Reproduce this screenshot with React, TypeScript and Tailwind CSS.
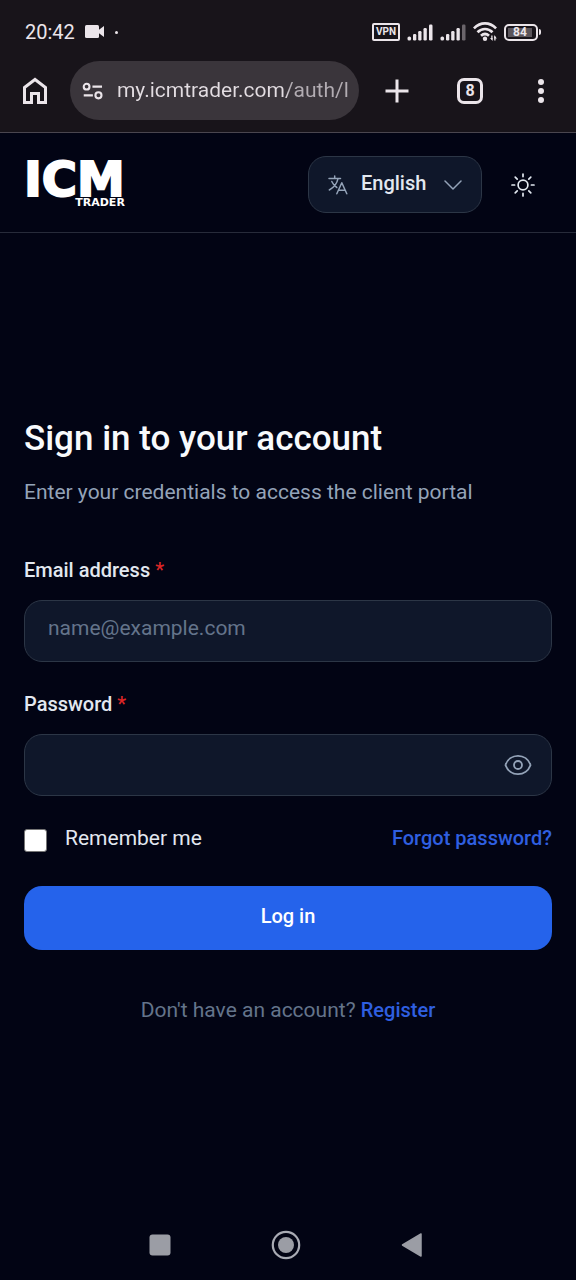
import { useState } from "react";

function VideoIcon() {
  return (
    <svg width="20" height="14" viewBox="0 0 20 14" fill="#ebe5ea" aria-hidden="true">
      <rect x="0" y="0" width="14" height="13" rx="1.5" />
      <path d="M13 5.5 19 1v11l-6-4.5z" />
    </svg>
  );
}

function SignalIcon({ weak = false }: { weak?: boolean }) {
  return (
    <svg width="26" height="18" viewBox="0 0 26 18" fill="#ebe5ea" aria-hidden="true">
      <rect x="0.5" y="13.500" width="3.6" height="4" rx="1.6" />
      <rect x="6" y="11" width="3.3" height="6.500" rx="1.2" />
      <rect x="11.2" y="8" width="3.3" height="9.500" rx="1.2" />
      <rect x="16.5" y="5" width="3.3" height="12.500" rx="1.2" />
      <rect x="22" y="1.500" width="3.5" height="16" rx="1.2" fill={weak ? "#6b656b" : "#ebe5ea"} />
    </svg>
  );
}

function WifiIcon() {
  return (
    <svg width="24" height="20" viewBox="0 0 24 20" fill="none" stroke="#ebe5ea" strokeWidth="2.7" aria-hidden="true">
      <path d="M.9 6.400C7.500-.3 16.500-.3 23.100 6.400" />
      <path d="M4.500 10.200c4.400-4.300 10.600-4.300 15 0" />
      <path d="M8 13.800c2.400-2.200 5.600-2.200 8 0" />
      <circle cx="12" cy="16.800" r="2.200" fill="#ebe5ea" stroke="none" />
      <path d="M18.900 13.500v4M21.900 14.500v4" strokeWidth="1.300" />
      <path d="M17 16h2.600v3zM21.200 16.500h2.600L21.200 13z" fill="#ebe5ea" stroke="none" />
    </svg>
  );
}

function HomeIcon() {
  return (
    <svg width="26" height="28" viewBox="0 0 26 28" fill="none" stroke="#ebe5ea" strokeWidth="3" aria-hidden="true">
      <path d="M2.500 10.500 13 2.500l10.500 8v15h-7v-9h-7v9h-7z" />
    </svg>
  );
}

function TuneIcon() {
  return (
    <svg width="24" height="20" viewBox="0 0 24 20" fill="none" stroke="#ebe5ea" strokeWidth="2.400" aria-hidden="true">
      <circle cx="5.300" cy="5" r="3.300" />
      <path d="M12 5h11M2 15h10.500" />
      <circle cx="18.900" cy="15" r="3.500" />
    </svg>
  );
}

function TranslateIcon() {
  return (
    <svg width="20" height="20" viewBox="0 0 20 20" fill="none" stroke="#94a3b8" strokeWidth="1.500" strokeLinecap="round" strokeLinejoin="round" aria-hidden="true">
      <path d="M1 3.500h11.500M6.700 1v2.500M10 3.700C9 8.500 6 12.500 1.300 15M3.800 6.500c1.200 2.800 3 4.700 5 6" />
      <path d="m8.800 18.800 5-11 5 11M10.500 15.300h6.700" />
    </svg>
  );
}

function SunIcon() {
  return (
    <svg width="26" height="26" viewBox="0 0 26 26" fill="none" stroke="#e2e8f0" strokeWidth="1.700" strokeLinecap="round" aria-hidden="true">
      <circle cx="13" cy="13" r="4.900" />
      <path d="M13 2v2.600M13 21.400V24M2 13h2.600M21.400 13H24M5.200 5.200l2 2M18.800 18.800l2 2M5.200 20.800l2-2M18.800 7.200l2-2" />
    </svg>
  );
}

function EyeIcon() {
  return (
    <svg width="28" height="22" viewBox="0 0 28 22" fill="none" stroke="#94a3b8" strokeWidth="1.800" strokeLinejoin="round" aria-hidden="true">
      <path d="M1.600 11.400a1 1 0 0 1 0-.8C3.500 5.500 8.300 1.800 14 1.800s10.500 3.700 12.400 8.800a1 1 0 0 1 0 .8C24.500 16.500 19.700 20.200 14 20.200S3.500 16.500 1.600 11.400Z" />
      <circle cx="14" cy="11" r="4" />
    </svg>
  );
}

function StatusBar() {
  return (
    <div className="flex h-16 items-center justify-between pr-[35px] pl-[25px]">
      <div className="flex items-center gap-[10px]">
        <span className="text-xl text-[#ebe5ea]">20:42</span>
        <VideoIcon />
        <span className="h-[3px] w-[3px] rounded-full bg-[#ebe5ea]" />
      </div>
      <div className="flex items-center gap-[7px]">
        <span className="flex h-[18px] w-7 items-center justify-center rounded-xs border-2 border-[#ebe5ea] text-[10px] leading-none font-bold text-[#ebe5ea]">
          VPN
        </span>
        <SignalIcon />
        <SignalIcon weak />
        <WifiIcon />
        <span className="flex items-center gap-px">
          <span className="flex h-[17px] w-[34px] items-center rounded-[5px] border-2 border-[#ebe5ea] p-0.5">
            <span className="flex h-full w-6 items-center justify-center bg-[#5b555b] text-xs leading-none font-bold text-[#ebe5ea]">
              84
            </span>
          </span>
          <span className="h-[6px] w-0.5 rounded-r bg-[#ebe5ea]" />
        </span>
      </div>
    </div>
  );
}

function BrowserBar() {
  return (
    <div className="flex h-[68px] items-start pr-[23px] pl-[22px]">
      <button type="button" aria-label="Home" className="flex h-[54px] w-[26px] items-center justify-center">
        <HomeIcon />
      </button>
      <div className="-mt-[3px] ml-[22px] flex h-[59px] min-w-0 flex-1 items-center gap-[14px] rounded-full bg-[#3a353b] pr-2 pl-3">
        <TuneIcon />
        <input
          type="text"
          aria-label="Address"
          readOnly
          value="my.icmtrader.com/auth/l"
          className="w-full min-w-0 bg-linear-to-r from-[#e3dde2] from-72% to-[#b3adb3] to-74% bg-clip-text text-[21px] text-transparent outline-none"
        />
      </div>
      <button type="button" aria-label="New tab" className="ml-[26px] flex h-[54px] w-6 items-center justify-center">
        <svg width="24" height="24" viewBox="0 0 24 24" stroke="#ebe5ea" strokeWidth="3" aria-hidden="true">
          <path d="M12 .5v23M.5 12h23" />
        </svg>
      </button>
      <button type="button" aria-label="Switch tabs" className="ml-12 flex h-[54px] w-[26px] items-center justify-center">
        <span className="flex h-[26px] w-[26px] items-center justify-center rounded-[7px] border-3 border-[#ebe5ea] text-base leading-none font-bold text-[#ebe5ea]">
          8
        </span>
      </button>
      <button type="button" aria-label="More" className="ml-[46px] flex h-[54px] w-6 items-center justify-center">
        <svg width="6" height="24" viewBox="0 0 6 24" fill="#ebe5ea" aria-hidden="true">
          <circle cx="3" cy="3" r="3" />
          <circle cx="3" cy="12" r="3" />
          <circle cx="3" cy="21" r="3" />
        </svg>
      </button>
    </div>
  );
}

function SiteHeader() {
  return (
    <header className="flex h-[100px] items-center justify-between border-b border-[#272b3a] px-6 pt-1">
      <a href="#" className="flex flex-col font-['DejaVu_Sans',sans-serif] font-bold text-white">
        <span className="text-5xl leading-9 [-webkit-text-stroke:2px_white]">ICM</span>
        <span className="self-end text-[11px] leading-[11px]">TRADER</span>
      </a>
      <div className="flex items-center gap-[28px] pr-4">
        <div className="relative">
          <select
            aria-label="Language"
            className="h-[57px] w-[174px] appearance-none rounded-[18px] border border-[#2c3646] bg-[#0f172a] pb-1 pl-[52px] text-xl font-medium text-[#e2e8f0] outline-none"
          >
            <option>English</option>
          </select>
          <span className="pointer-events-none absolute inset-y-0 left-5 flex items-center">
            <TranslateIcon />
          </span>
          <span className="pointer-events-none absolute inset-y-0 right-5 flex items-center">
            <svg width="18" height="10" viewBox="0 0 18 10" fill="none" stroke="#94a3b8" strokeWidth="1.500" strokeLinecap="round" strokeLinejoin="round" aria-hidden="true">
              <path d="m1 1 8 8 8-8" />
            </svg>
          </span>
        </div>
        <button type="button" aria-label="Toggle theme">
          <SunIcon />
        </button>
      </div>
    </header>
  );
}

function SignInForm() {
  const [visible, setVisible] = useState(false);
  const field =
    "h-[62px] w-full rounded-[18px] border border-[#2c3646] bg-[#0f172a] px-[23px] pb-1.5 text-[21px] text-[#e2e8f0] outline-none placeholder:text-[#64748b]";
  return (
    <main className="flex flex-1 flex-col justify-center px-6">
      <h1 className="text-[35px] leading-10 font-medium text-[#f8fafc]">Sign in to your account</h1>
      <p className="mt-[19px] text-[21px] leading-7 text-[#94a3b8]">Enter your credentials to access the client portal</p>
      <form onSubmit={(event) => event.preventDefault()} className="mt-[50px] flex flex-col">
        <label htmlFor="email" className="text-xl leading-7 font-medium text-[#e2e8f0]">
          Email address <span className="text-[#dc2626]">*</span>
        </label>
        <input id="email" type="email" placeholder="name@example.com" className={`mt-4 ${field}`} />
        <label htmlFor="password" className="mt-7 text-xl leading-7 font-medium text-[#e2e8f0]">
          Password <span className="text-[#dc2626]">*</span>
        </label>
        <div className="relative mt-4">
          <input id="password" type={visible ? "text" : "password"} className={field} />
          <button
            type="button"
            aria-label="Show password"
            onClick={() => setVisible(!visible)}
            className="absolute inset-y-0 right-5 flex items-center"
          >
            <EyeIcon />
          </button>
        </div>
        <div className="mt-7 flex items-center justify-between text-[21px] leading-7">
          <label className="flex items-center gap-[18px] text-[#e2e8f0]">
            <input
              type="checkbox"
              className="mt-1 h-[23px] w-[23px] appearance-none rounded-[3px] border border-[#767676] bg-white checked:bg-[#2563eb]"
            />
            Remember me
          </label>
          <a href="#" className="text-xl font-medium text-[#2f5fe0]">Forgot password?</a>
        </div>
        <button type="submit" className="mt-[34px] h-16 rounded-[18px] bg-[#2563eb] pb-1 text-xl font-medium text-white">
          Log in
        </button>
      </form>
      <p className="mt-[46px] text-center text-[21px] leading-7 text-[#64748b]">
        Don't have an account? <a href="#" className="text-xl font-medium text-[#2f5fe0]">Register</a>
      </p>
    </main>
  );
}

function SystemNav() {
  return (
    <nav className="flex h-[70px] items-center justify-center gap-[100px] pr-1">
      <button type="button" aria-label="Recent apps">
        <svg width="22" height="22" viewBox="0 0 22 22" fill="#9b9da5" aria-hidden="true">
          <rect x="0.500" y="0.500" width="21" height="21" rx="3" />
        </svg>
      </button>
      <button type="button" aria-label="Home screen">
        <svg width="30" height="30" viewBox="0 0 30 30" fill="none" stroke="#a9abb4" strokeWidth="2.200" aria-hidden="true">
          <circle cx="15" cy="15" r="13.200" />
          <circle cx="15" cy="15" r="8" fill="#9b9da5" stroke="none" />
        </svg>
      </button>
      <button type="button" aria-label="Back">
        <svg width="22" height="26" viewBox="0 0 22 26" fill="#9b9da5" stroke="#9b9da5" strokeWidth="1.500" strokeLinejoin="round" aria-hidden="true">
          <path d="M1.500 13 20 2v22z" />
        </svg>
      </button>
    </nav>
  );
}

export default function App() {
  return (
    <div className="flex min-h-screen flex-col bg-[#020414] font-[Roboto,sans-serif]">
      <div className="border-b border-[#4a464f] bg-[#18141a]">
        <StatusBar />
        <BrowserBar />
      </div>
      <SiteHeader />
      <SignInForm />
      <SystemNav />
    </div>
  );
}
